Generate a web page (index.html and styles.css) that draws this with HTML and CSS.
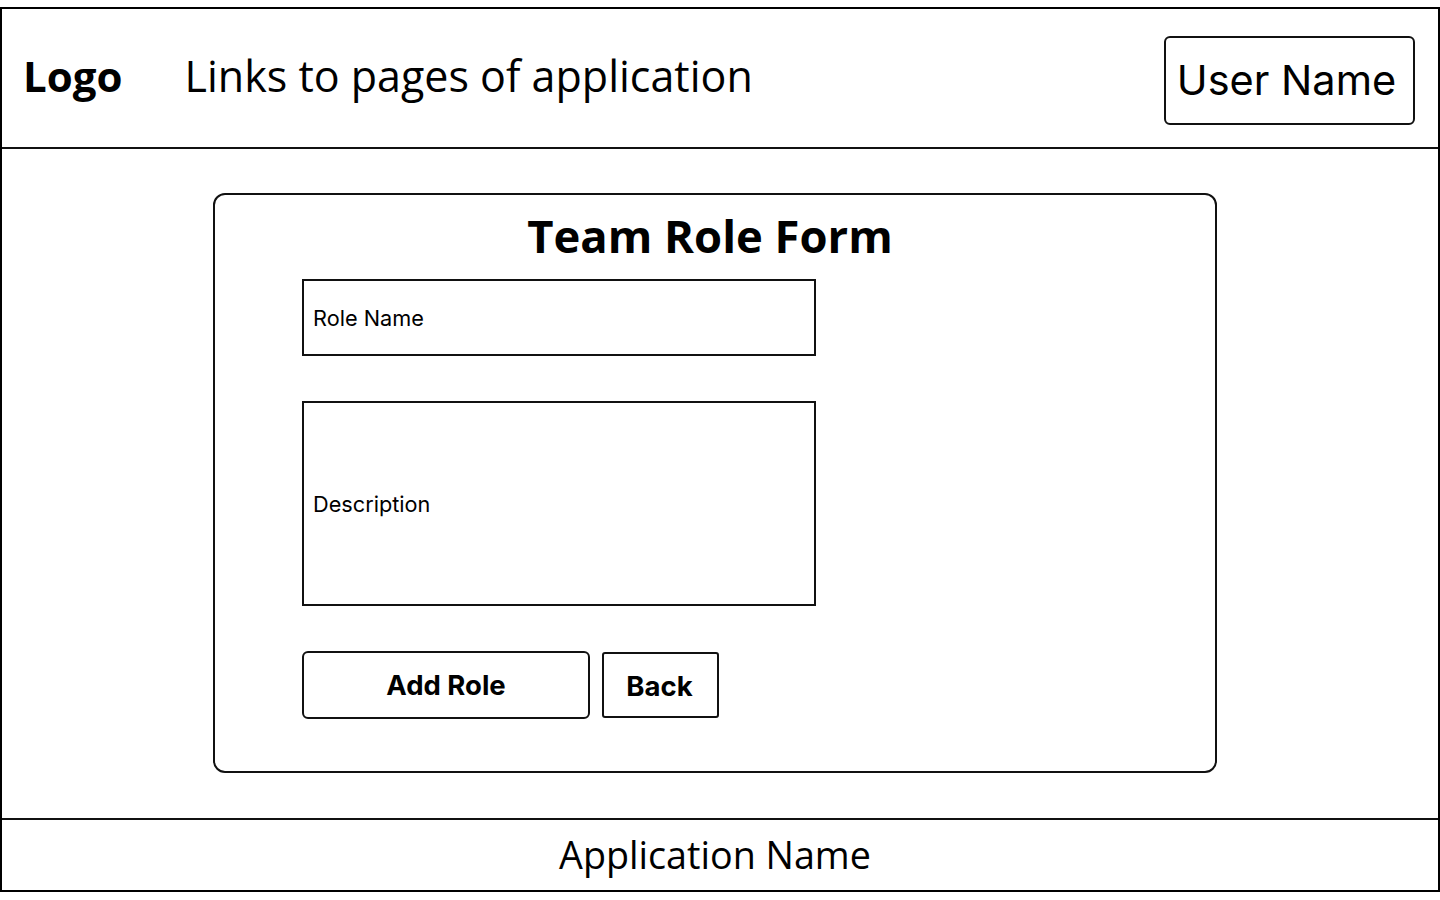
FILE: index.html
```html
<!DOCTYPE html>
<html lang="en">
<head>
<meta charset="utf-8">
<title>Team Role Form</title>
<link rel="stylesheet" href="styles.css">
</head>
<body>
<div class="frame">
  <header class="topbar">
    <div class="logo">Logo</div>
    <nav class="links">Links to pages of application</nav>
    <div class="user">User Name</div>
  </header>
  <main class="main">
    <section class="card">
      <h1 class="title">Team Role Form</h1>
      <div class="field field-name"><span>Role Name</span></div>
      <div class="field field-desc"><span>Description</span></div>
      <div class="actions">
        <button class="btn btn-add">Add Role</button>
        <button class="btn btn-back">Back</button>
      </div>
    </section>
  </main>
  <footer class="footer">Application Name</footer>
</div>
</body>
</html>
```
FILE: styles.css
```css
* { box-sizing: border-box; }
html, body { margin: 0; padding: 0; background: #fff; }
body { font-family: "Open Sans", "Liberation Sans", sans-serif; color: #000; }

.frame {
  margin-top: 7px;
  width: 1440px;
  height: 885px;
  border: 2px solid #000;
  display: flex;
  flex-direction: column;
}

.topbar {
  height: 140px;
  flex: none;
  border-bottom: 2px solid #111;
  display: flex;
  align-items: center;
  padding: 0 23px 0 21px;
}
.logo {
  font-weight: 700;
  font-size: 42px;
  line-height: 1;
  margin-top: -4px;
}
.links {
  margin-left: 62px;
  font-size: 43px;
  line-height: 1;
  margin-top: -6px;
}
.user {
  margin-left: auto;
  width: 251px;
  height: 89px;
  border: 2px solid #111;
  border-radius: 6px;
  display: flex;
  align-items: center;
  justify-content: center;
  font-family: "Inter", "Open Sans", sans-serif;
  font-size: 41.5px;
  line-height: 1;
  margin-top: 5px;
  padding-right: 6px;
}

.main {
  flex: 1;
  padding: 44px 0 0 211px;
}
.card {
  width: 1004px;
  height: 580px;
  border: 2px solid #111;
  border-radius: 12px;
  padding: 17px 0 0 87px;
}
.title {
  margin: 0 0 21px -87px;
  text-align: center;
  font-size: 45.4px;
  font-weight: 700;
  line-height: 46px;
  padding-right: 10px;
}
.field {
  width: 514px;
  border: 2px solid #111;
  display: flex;
  align-items: center;
  padding-left: 9px;
  font-family: "Inter", "Open Sans", sans-serif;
  font-size: 21.7px;
}
.field-name { height: 77px; }
.field-desc { height: 205px; margin-top: 45px; }

.actions {
  margin-top: 45px;
  display: flex;
  align-items: center;
  gap: 12px;
}
.btn {
  background: #fff;
  border: 2px solid #111;
  border-radius: 5px;
  font-family: "Inter", "Open Sans", sans-serif;
  font-weight: 700;
  font-size: 27.5px;
  color: #000;
  padding: 0;
}
.btn-add { width: 288px; height: 68px; border-radius: 6px; }
.btn-back { width: 117px; height: 66px; border-radius: 3px; padding-top: 2px; padding-right: 2px; }

.footer {
  height: 72px;
  flex: none;
  border-top: 2px solid #111;
  display: flex;
  align-items: center;
  justify-content: center;
  font-size: 37.7px;
  line-height: 1;
  padding-bottom: 0;
  padding-right: 10px;
}
```
